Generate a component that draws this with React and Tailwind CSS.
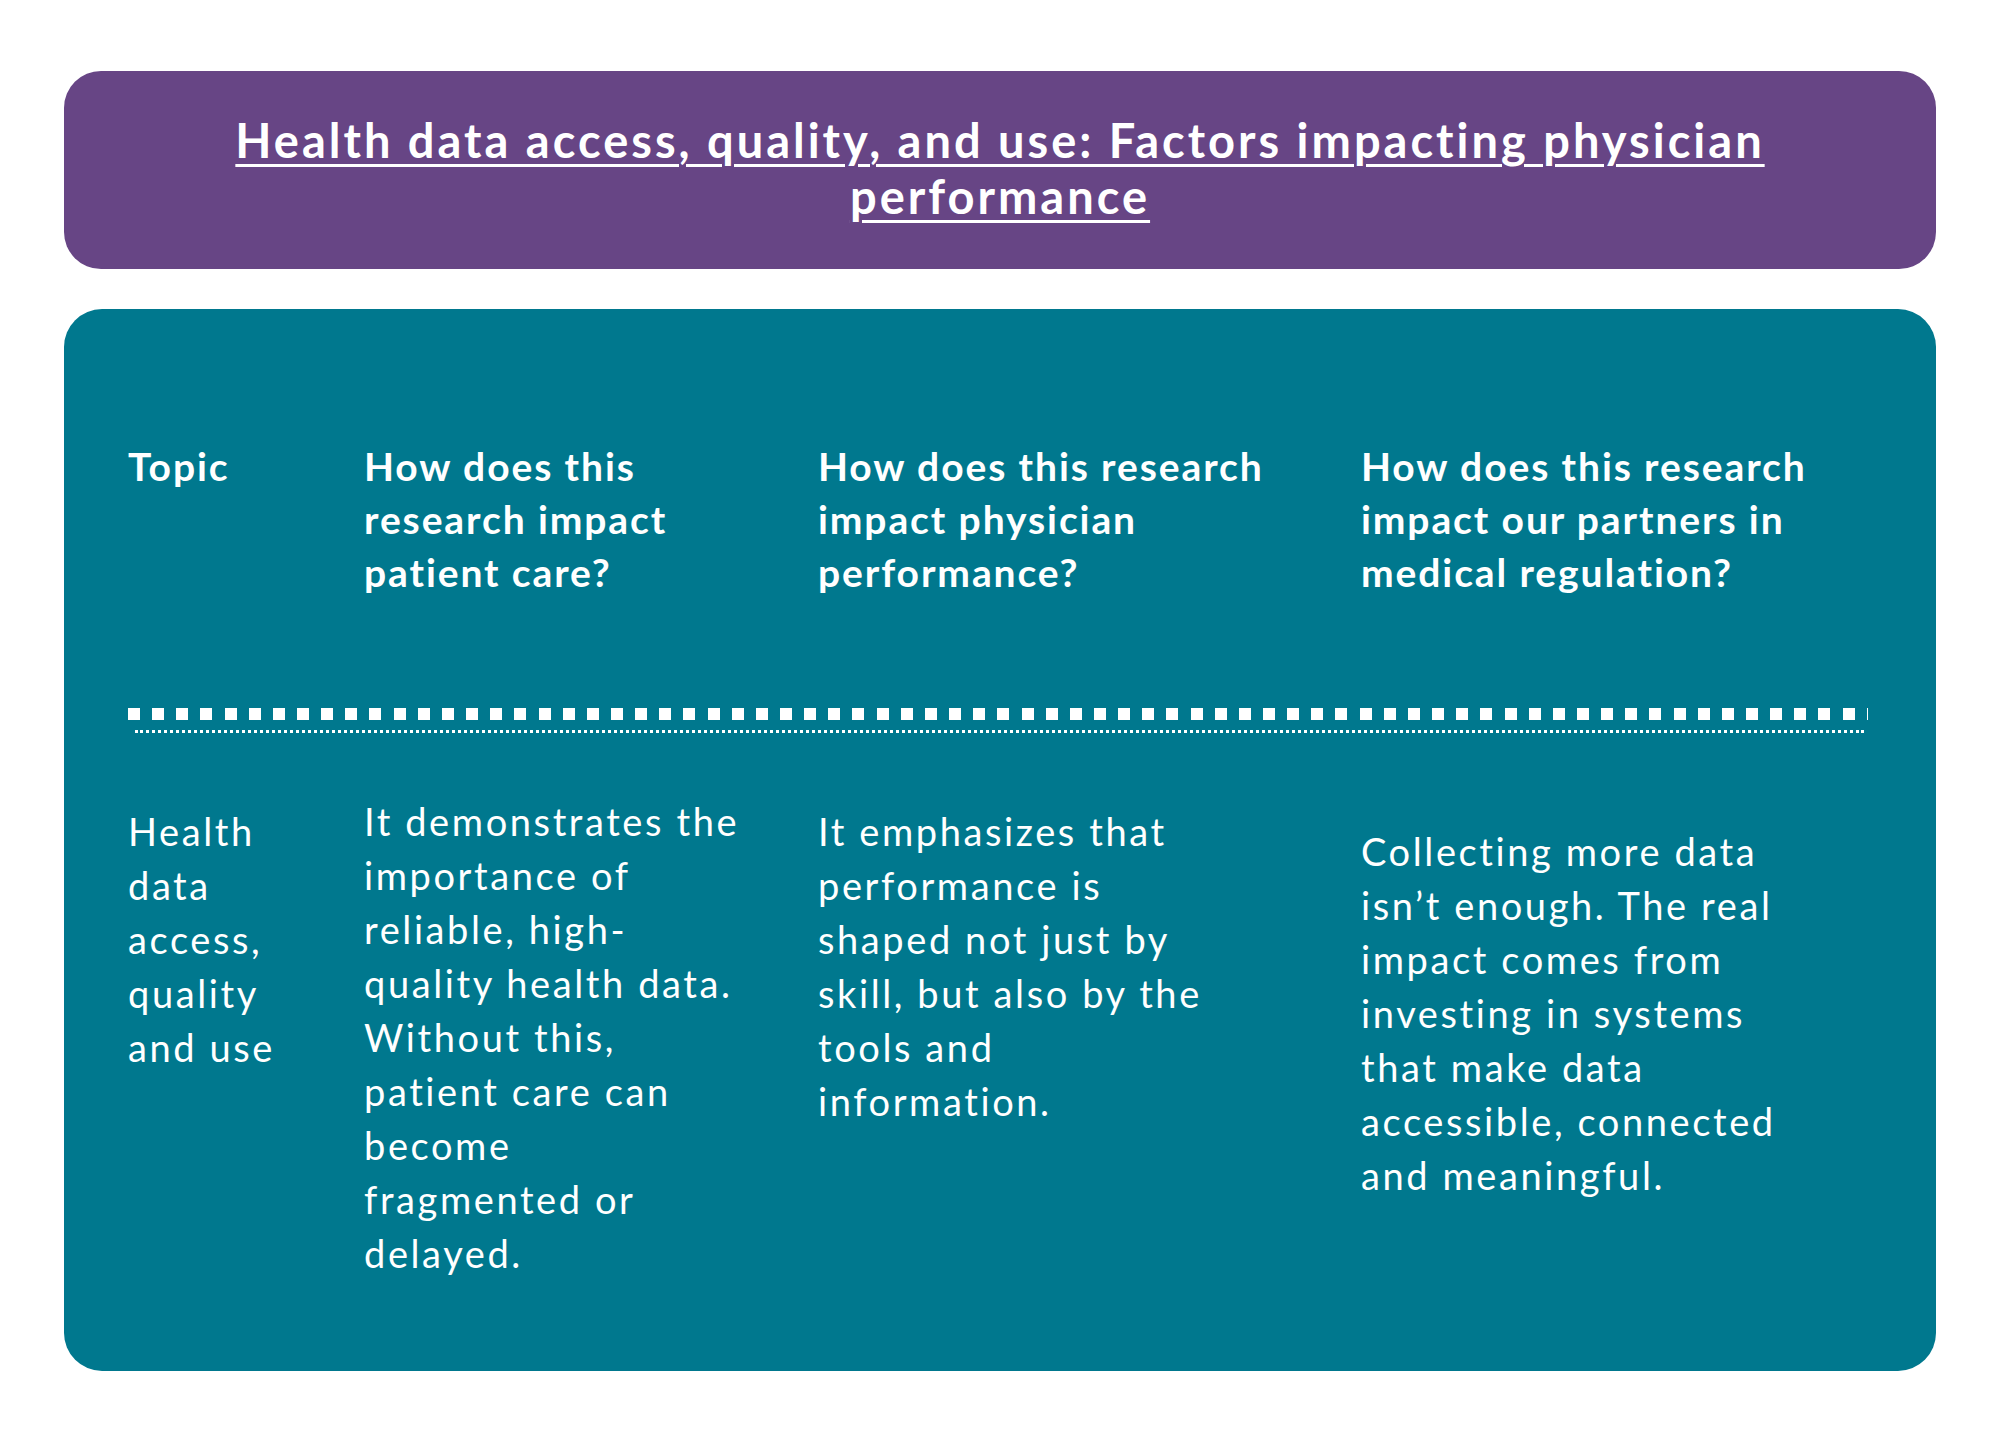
import React from "react";

const font = { fontFamily: "Lato, 'Noto Sans', sans-serif" };

function Lines({ lines }) {
  return lines.map((l, i) => (
    <React.Fragment key={i}>
      {l}
      {i < lines.length - 1 && <br />}
    </React.Fragment>
  ));
}

export default function App() {
  const headers = [
    ["Topic"],
    ["How does this", "research impact", "patient care?"],
    ["How does this research", "impact physician", "performance?"],
    ["How does this research", "impact our partners in", "medical regulation?"],
  ];
  const body = [
    { pt: "pt-[10px]", lines: ["Health", "data", "access,", "quality", "and use"] },
    {
      pt: "pt-0",
      lines: [
        "It demonstrates the",
        "importance of",
        "reliable, high-",
        "quality health data.",
        "Without this,",
        "patient care can",
        "become",
        "fragmented or",
        "delayed.",
      ],
    },
    {
      pt: "pt-[10px]",
      lines: [
        "It emphasizes that",
        "performance is",
        "shaped not just by",
        "skill, but also by the",
        "tools and",
        "information.",
      ],
    },
    {
      pt: "pt-[30px]",
      lines: [
        "Collecting more data",
        "isn\u2019t enough. The real",
        "impact comes from",
        "investing in systems",
        "that make data",
        "accessible, connected",
        "and meaningful.",
      ],
    },
  ];

  return (
    <div className="min-h-[1429px] w-[2000px] bg-white px-[64px] pt-[71px]" style={font}>
      <div className="rounded-[37px] bg-[#674585] pt-[41px] pb-[45px] text-center">
        <h1 className="text-[47px] font-bold leading-[56px] tracking-[3px] text-white underline decoration-[3px] underline-offset-[6px]">
          Health data access, quality, and use: Factors impacting physician
          <br />
          performance
        </h1>
      </div>

      <div className="mt-[40px] rounded-[38px] bg-[#00788e] pl-[64px] pr-[68px] pt-[131px] pb-[91px] text-white">
        <div className="grid grid-cols-[236px_454px_543px_1fr]">
          {headers.map((h, i) => (
            <div key={i} className="whitespace-nowrap text-[39px] font-bold leading-[53px] tracking-[1.9px]">
              <Lines lines={h} />
            </div>
          ))}
        </div>

        <div className="mt-[109px] h-[12px] w-full bg-[image:repeating-linear-gradient(to_right,#ffffff_0px,#ffffff_12px,transparent_12px,transparent_24.15px)]" />
        <div className="ml-[7px] mr-[4px] mt-[10px] border-t-[3px] border-dotted border-white" />

        <div className="mt-[61px] grid grid-cols-[236px_454px_543px_1fr] items-start">
          {body.map((b, i) => (
            <div key={i} className={`${b.pt} whitespace-nowrap text-[38px] font-normal leading-[54px] tracking-[2.6px]`}>
              <Lines lines={b.lines} />
            </div>
          ))}
        </div>
      </div>
    </div>
  );
}
